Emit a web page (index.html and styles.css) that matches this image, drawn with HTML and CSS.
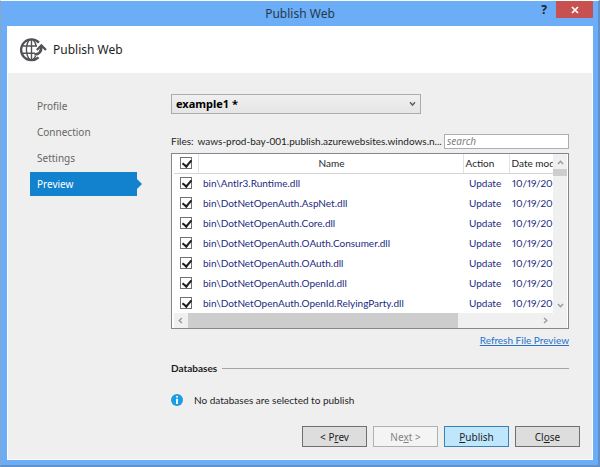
FILE: index.html
```
<!DOCTYPE html>
<html lang="en">
<head>
    <meta charset="UTF-8">
    <meta name="viewport" content="width=device-width, initial-scale=1.0">
    <title>Publish Web</title>
    <link rel="stylesheet" href="styles.css">
</head>
<body>
    <div class="window">
        <!-- Title bar -->
        <div class="titlebar">
            <span class="title">Publish Web</span>
            <div class="window-buttons">
                <button type="button" class="help" aria-label="Help">?</button>
                <button type="button" class="close" aria-label="Close window">
                    <svg width="8" height="8" viewBox="0 0 8 8"><path d="M1 1L7 7M7 1L1 7" stroke="#fff" stroke-width="1.7"/></svg>
                </button>
            </div>
        </div>

        <div class="content">
            <header>
                <svg class="globe" width="28" height="26" viewBox="0 0 28 26" fill="none" stroke="#505256">
                    <path d="M20 5.6A10.4 10.4 0 1 0 19.6 20.4" stroke-width="2.3"/>
                    <path d="M12.5 2.5V22.5M3 9H18M3 16.2H16" stroke-width="1.4"/>
                    <path d="M10.5 2.5C6.4 8 6.4 17 10.5 22.5M14 2.5C16.2 5 17 7 17.2 9.5M16.6 19C16 20.4 15.2 21.6 14 22.5" stroke-width="1.4"/>
                    <path d="M15.5 17.5C20.5 17.5 22.4 14.5 22.4 9.5" stroke-width="2.6"/>
                    <path d="M17.8 13L22.4 8.4L27 13" stroke-width="2.2"/>
                </svg>
                <h1>Publish Web</h1>
            </header>

            <div class="body">
                <nav>
                    <a href="#">Profile</a>
                    <a href="#">Connection</a>
                    <a href="#">Settings</a>
                    <a href="#" class="active">Preview</a>
                </nav>

                <main>
                    <div class="profile">
                        <select aria-label="Profile">
                            <option>example1 *</option>
                        </select>
                        <svg width="7" height="6" viewBox="0 0 7 6"><path d="M1 1.2L3.5 4L6 1.2" fill="none" stroke="#606060" stroke-width="1.5"/></svg>
                    </div>

                    <div class="files-bar">
                        <label for="search">Files:</label>
                        <span class="server">waws-prod-bay-001.publish.azurewebsites.windows.n...</span>
                        <input type="text" id="search" class="search" placeholder="search">
                    </div>

                    <!-- File list -->
                    <div class="file-list">
                        <div class="table-wrapper">
                            <table>
                                <thead>
                                    <tr>
                                        <th class="col-check"><input type="checkbox" aria-label="Select all" checked></th>
                                        <th class="col-name">Name</th>
                                        <th class="col-action">Action</th>
                                        <th class="col-date">Date mod</th>
                                    </tr>
                                </thead>
                                <tbody>
                                    <tr>
                                        <td><input type="checkbox" id="f1" checked></td>
                                        <td><label for="f1">bin\Antlr3.Runtime.dll</label></td>
                                        <td>Update</td>
                                        <td>10/19/20</td>
                                    </tr>
                                    <tr>
                                        <td><input type="checkbox" id="f2" checked></td>
                                        <td><label for="f2">bin\DotNetOpenAuth.AspNet.dll</label></td>
                                        <td>Update</td>
                                        <td>10/19/20</td>
                                    </tr>
                                    <tr>
                                        <td><input type="checkbox" id="f3" checked></td>
                                        <td><label for="f3">bin\DotNetOpenAuth.Core.dll</label></td>
                                        <td>Update</td>
                                        <td>10/19/20</td>
                                    </tr>
                                    <tr>
                                        <td><input type="checkbox" id="f4" checked></td>
                                        <td><label for="f4">bin\DotNetOpenAuth.OAuth.Consumer.dll</label></td>
                                        <td>Update</td>
                                        <td>10/19/20</td>
                                    </tr>
                                    <tr>
                                        <td><input type="checkbox" id="f5" checked></td>
                                        <td><label for="f5">bin\DotNetOpenAuth.OAuth.dll</label></td>
                                        <td>Update</td>
                                        <td>10/19/20</td>
                                    </tr>
                                    <tr>
                                        <td><input type="checkbox" id="f6" checked></td>
                                        <td><label for="f6">bin\DotNetOpenAuth.OpenId.dll</label></td>
                                        <td>Update</td>
                                        <td>10/19/20</td>
                                    </tr>
                                    <tr>
                                        <td><input type="checkbox" id="f7" checked></td>
                                        <td><label for="f7">bin\DotNetOpenAuth.OpenId.RelyingParty.dll</label></td>
                                        <td>Update</td>
                                        <td>10/19/20</td>
                                    </tr>
                                </tbody>
                            </table>
                        </div>
                        <div class="scroll-y">
                            <svg width="7" height="5" viewBox="0 0 7 5"><path d="M1 4L3.5 1.2L6 4"/></svg>
                            <div class="thumb"></div>
                            <svg width="7" height="5" viewBox="0 0 7 5"><path d="M1 1L3.5 3.8L6 1"/></svg>
                        </div>
                        <div class="scroll-x">
                            <svg width="5" height="7" viewBox="0 0 5 7"><path d="M4 1L1.2 3.5L4 6"/></svg>
                            <div class="thumb"></div>
                            <svg width="5" height="7" viewBox="0 0 5 7"><path d="M1 1L3.8 3.5L1 6"/></svg>
                        </div>
                        <div class="corner"></div>
                    </div>

                    <a href="#" class="refresh">Refresh File Preview</a>

                    <h2>Databases</h2>
                    <p class="info">
                        <svg width="12" height="12" viewBox="0 0 12 12"><circle cx="6" cy="6" r="6" fill="#1b9de2"/><path d="M6 2V3.6M6 4.8V10" stroke="#fff" stroke-width="1.8"/></svg>
                        No databases are selected to publish
                    </p>
                </main>
            </div>

            <footer>
                <button type="button">&lt; P<u>r</u>ev</button>
                <button type="button" disabled>Ne<u>x</u>t &gt;</button>
                <button type="button" class="primary"><u>P</u>ublish</button>
                <button type="button">Cl<u>o</u>se</button>
            </footer>
        </div>
    </div>
</body>
</html>
```
FILE: styles.css
```
* {
    box-sizing: border-box;
}

body {
    margin: 0;
    font-family: Lato, "Open Sans", sans-serif;
    font-size: 10px;
    line-height: 16px;
    color: #1e1e1e;
    background: #fff;
}

button, input, select {
    font: inherit;
    color: inherit;
    margin: 0;
}

.titlebar, header, nav, footer {
    font-family: "Noto Sans", "Open Sans", sans-serif;
}

/* Window frame */
.window {
    min-height: 100vh;
    display: flex;
    flex-direction: column;
    padding: 0 5px 5px 6px;
    background: #6badf6;
    border: 1px solid #8ba5c4;
    border-top-color: #fff;
    border-right: 2px solid #6290c8;
    border-bottom: 2px solid #6290c8;
}

.titlebar {
    display: grid;
    grid-template-columns: 1fr auto 1fr;
    height: 25px;
}

.title {
    grid-column: 2;
    font-size: 12px;
    line-height: 25px;
    color: #27394d;
}

.window-buttons {
    display: flex;
    justify-content: flex-end;
    align-items: flex-start;
    gap: 6px;
}

.window-buttons button {
    height: 17px;
    padding: 0;
    border: none;
    background: none;
}

.window-buttons .help {
    width: 12px;
    font-size: 12px;
    font-weight: bold;
    line-height: 17px;
}

.window-buttons .close {
    width: 37px;
    display: flex;
    align-items: center;
    justify-content: center;
    background: #c75050;
}

.content {
    flex: 1;
    display: flex;
    flex-direction: column;
    background: #efefef;
    border: 1px solid #fff;
}

header {
    display: flex;
    align-items: center;
    gap: 6px;
    height: 46px;
    padding-left: 11px;
    background: #fff;
}

h1 {
    margin: 0;
    font-size: 12px;
    font-weight: normal;
}

.body {
    flex: 1;
    display: flex;
    gap: 34px;
    padding: 21px 23px 0 22px;
}

/* Steps */
nav {
    width: 107px;
    display: flex;
    flex-direction: column;
    gap: 2px;
}

nav a {
    height: 24px;
    padding-left: 7px;
    line-height: 24px;
    color: #666;
    text-decoration: none;
}

nav .active {
    position: relative;
    background: #1382ce;
    color: #fff;
}

nav .active::after {
    content: "";
    position: absolute;
    left: 100%;
    top: 7px;
    border: 5px solid transparent;
    border-left-color: #1382ce;
    border-right: none;
}

main {
    flex: 1;
    min-width: 0;
}

.profile {
    display: flex;
    align-items: center;
    width: 250px;
    height: 20px;
    padding-right: 4px;
    border: 1px solid #acacac;
    background: linear-gradient(#f0f0f0, #e5e5e5);
}

.profile select {
    flex: 1;
    padding: 0 4px;
    border: none;
    background: none;
    font-family: "Noto Sans", "Open Sans", sans-serif;
    font-size: 11px;
    font-weight: bold;
    color: #000;
    appearance: none;
}

.files-bar {
    display: flex;
    align-items: center;
    gap: 4px;
    margin-top: 19px;
}

.server {
    flex: 1;
    min-width: 0;
    white-space: nowrap;
}

.search {
    width: 125px;
    height: 15px;
    padding: 0 2px;
    border: 1px solid #abadb3;
    background: #fff;
    font-family: "Noto Sans", "Open Sans", sans-serif;
}

.search::placeholder {
    color: #808080;
    font-style: italic;
}

/* File list */
.file-list {
    display: grid;
    grid-template-columns: 1fr 14px;
    grid-template-rows: auto 15px;
    margin-top: 4px;
    padding: 0 1px 0 2px;
    border: 1px solid #828790;
    background: #fff;
}

.table-wrapper {
    overflow: hidden;
}

table {
    width: 100%;
    table-layout: fixed;
    border-collapse: collapse;
    color: #1b2a80;
    font-variant-numeric: proportional-nums;
}

th, td {
    height: 20px;
    padding: 0 0 0 5px;
    text-align: left;
    font-weight: normal;
    line-height: 16px;
    white-space: nowrap;
}

th {
    height: 19px;
    padding-left: 2px;
    border-right: 1px solid #e0e3e6;
    border-bottom: 1px solid #d5d5d5;
    color: #1e1e1e;
}

th:last-child {
    border-right: none;
}

td:nth-child(3) {
    padding-left: 6px;
}

td:last-child {
    padding-left: 3px;
}

th:first-child, td:first-child {
    padding-left: 6px;
}

.col-check {
    width: 24px;
}

.col-name {
    text-align: center;
}

.col-action {
    width: 46px;
}

.col-date {
    width: 44px;
}

input[type="checkbox"] {
    display: block;
    width: 12px;
    height: 12px;
    border: 1px solid #707070;
    background: #fff;
    appearance: none;
}

input[type="checkbox"]:checked::before {
    content: "";
    display: block;
    width: 4px;
    height: 7px;
    margin: 0 0 0 3px;
    border: solid #1e1e1e;
    border-width: 0 2px 2px 0;
    transform: rotate(40deg);
}

.scroll-y, .scroll-x {
    display: flex;
    align-items: center;
    background: #f0f0f0;
}

.scroll-y {
    flex-direction: column;
    padding: 6px 0 5px;
}

.scroll-y .thumb {
    width: 100%;
    height: 7px;
    margin: 4px 0 auto;
    background: #cdcdcd;
}

.scroll-x {
    padding: 0 5px 0 4px;
}

.scroll-x .thumb {
    width: 73%;
    height: 100%;
    margin: 0 auto 0 5px;
    background: #cdcdcd;
}

.scroll-y svg, .scroll-x svg {
    flex: none;
    fill: none;
    stroke: #999;
    stroke-width: 1.4;
}

.corner {
    background: #f0f0f0;
}

.refresh {
    display: block;
    width: fit-content;
    margin: 3px 0 0 auto;
    color: #2672cc;
}

h2 {
    display: flex;
    align-items: center;
    gap: 5px;
    margin: 12px 0 0;
    font-size: 10px;
    line-height: 16px;
}

h2::after {
    content: "";
    flex: 1;
    height: 1px;
    background: #a5a5a5;
}

.info {
    display: flex;
    align-items: center;
    gap: 11px;
    margin: 16px 0 0;
}

footer {
    display: flex;
    justify-content: flex-end;
    gap: 6px;
    padding: 0 12px 12px;
}

footer button {
    width: 65px;
    height: 21px;
    padding: 0;
    border: 1px solid #707070;
    background: #ddd;
    line-height: 16px;
}

footer button:disabled {
    border-color: #adb2b5;
    background: #f4f4f4;
    color: #838383;
}

footer .primary {
    border-color: #3c7fb1;
    background: #bee6fd;
}
```
